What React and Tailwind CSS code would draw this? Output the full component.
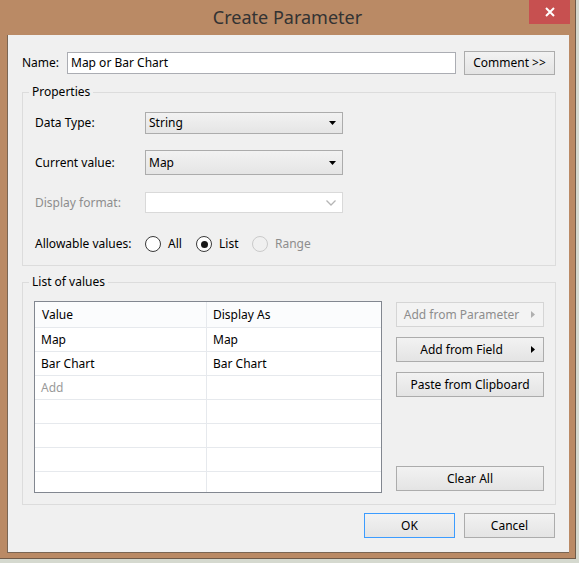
import React from "react";

const ui = "font-['Segoe_UI','Noto_Sans',sans-serif] text-[12px] text-black";
const btn =
  "flex h-[25px] items-center justify-center border border-[#acacac] bg-linear-to-b from-[#f2f2f2] to-[#e4e4e4] text-[12px] text-black";

function DownCaret({ color = "#000" }) {
  return (
    <svg width="7" height="4" viewBox="0 0 7 4" aria-hidden>
      <path d="M0 0h7L3.5 4z" fill={color} />
    </svg>
  );
}

function RightCaret({ color = "#000" }) {
  return (
    <svg width="4" height="7" viewBox="0 0 4 7" aria-hidden>
      <path d="M0 0v7L4 3.5z" fill={color} />
    </svg>
  );
}

function Select({ value, h }) {
  return (
    <div
      className={`flex w-[198px] ${h} items-center justify-between border border-[#acacac] bg-linear-to-b from-[#f2f2f2] to-[#e5e5e5] pl-[3px] pr-[6px]`}
    >
      <span>{value}</span>
      <DownCaret />
    </div>
  );
}

function Radio({ label, checked, disabled, w }) {
  return (
    <div className={`flex items-center ${w}`}>
      <span
        className={`flex h-[16px] w-[16px] items-center justify-center rounded-full border ${
          disabled ? "border-[#cacaca] bg-[#f0f0f0]" : "border-[#3a3a3a] bg-white"
        }`}
      >
        {checked ? <span className="h-[7px] w-[7px] rounded-full bg-[#1a1a1a]" /> : null}
      </span>
      <span className={`ml-[7px] ${disabled ? "text-[#8d8d8d]" : "text-black"}`}>{label}</span>
    </div>
  );
}

const rows = [
  ["Map", "Map"],
  ["Bar Chart", "Bar Chart"],
  ["Add", ""],
  ["", ""],
  ["", ""],
  ["", ""],
];

export default function App() {
  return (
    <div className="h-[563px] w-[579px] overflow-hidden bg-[#d5d9cf]">
      <div className="relative flex h-[559px] w-[576px] flex-col border-r border-b border-[#6f5a48] bg-[#ba8a65]">
        {/* title bar */}
        <div className="flex h-[35px] items-center justify-center font-['Segoe_UI','Noto_Sans',sans-serif] text-[18px] text-[#333]">
          Create Parameter
        </div>
        <button
          type="button"
          aria-label="Close"
          className="absolute top-0 right-[5px] flex h-[24px] w-[41px] items-center justify-center bg-[#c75050]"
        >
          <svg width="10" height="10" viewBox="0 0 10 10" aria-hidden>
            <path d="M1 1l8 8M9 1l-8 8" stroke="#fff" strokeWidth="2" />
          </svg>
        </button>

        {/* dialog body */}
        <div className={`ml-[7px] h-[518px] w-[562px] border-l border-b border-[#7a6654] bg-[#f0f0f0] pl-[14px] ${ui}`}>
          <div className="mt-[16px] flex h-[24px] items-center">
            <span className="w-[45px]">Name:</span>
            <div className="flex h-[22px] w-[389px] items-center border border-[#abadb3] bg-white pl-[3px]">
              Map or Bar Chart
            </div>
            <button type="button" className={`ml-[8px] w-[91px] !h-[24px] ${btn}`}>
              Comment &gt;&gt;
            </button>
          </div>

          <fieldset className="mt-[9px] w-[534px] border border-[#dcdcdc] pt-[12px] pb-[13px] pl-[12px]">
            <legend className="-ml-[6px] px-[3px] leading-[16px]">Properties</legend>
            <div className="flex h-[22px] items-center">
              <span className="w-[110px]">Data Type:</span>
              <Select value="String" h="h-[22px]" />
            </div>
            <div className="mt-[16px] flex h-[25px] items-center">
              <span className="w-[110px]">Current value:</span>
              <Select value="Map" h="h-[25px]" />
            </div>
            <div className="mt-[17px] flex h-[21px] items-center">
              <span className="w-[110px] text-[#8d8d8d]">Display format:</span>
              <div className="flex h-[21px] w-[198px] items-center justify-end border border-[#d9d9d9] bg-white pr-[6px]">
                <svg width="10" height="6" viewBox="0 0 10 6" aria-hidden>
                  <path d="M0.5 0.5L5 5l4.5-4.5" stroke="#b5b5b5" strokeWidth="1.3" fill="none" />
                </svg>
              </div>
            </div>
            <div className="mt-[23px] flex h-[16px] items-center">
              <span className="w-[110px]">Allowable values:</span>
              <Radio label="All" w="w-[51px]" />
              <Radio label="List" checked w="w-[56px]" />
              <Radio label="Range" disabled />
            </div>
          </fieldset>

          <fieldset className="mt-[8px] flex w-[534px] border border-[#dcdcdc] pt-[11px] pr-[11px] pb-[11px] pl-[11px]">
            <legend className="-ml-[5px] px-[3px] leading-[16px]">List of values</legend>
            <div className="flex w-full">
              <div className="w-[348px] border border-[#828790] bg-white">
                <div className="flex h-[26px] border-b border-[#e6e9ed] bg-[#fbfcfd]">
                  <div className="flex w-[172px] items-center border-r border-[#e6e9ed] pl-[7px]">Value</div>
                  <div className="flex flex-1 items-center pl-[6px]">Display As</div>
                </div>
                {rows.map(([a, b], i) => (
                  <div key={i} className="flex h-[24px] border-b border-[#e6e9ed]">
                    <div
                      className={`flex w-[172px] items-center border-r border-[#e6e9ed] pl-[6px] ${
                        a === "Add" ? "text-[#9a9a9a]" : ""
                      }`}
                    >
                      {a}
                    </div>
                    <div className="flex flex-1 items-center pl-[6px]">{b}</div>
                  </div>
                ))}
                <div className="flex h-[20px]">
                  <div className="w-[172px] border-r border-[#e6e9ed]" />
                  <div className="flex-1" />
                </div>
              </div>

              <div className="ml-[14px] flex w-[148px] flex-col justify-between pt-[1px] pb-[2px]">
                <div className="flex flex-col gap-[10px]">
                  <button
                    type="button"
                    className="relative flex h-[25px] items-center justify-center border border-[#d5d5d5] bg-[#f3f3f3] pr-[17px] text-[#8d8d8d]"
                  >
                    Add from Parameter
                    <span className="absolute right-[8px] top-[8px]">
                      <RightCaret color="#b0b0b0" />
                    </span>
                  </button>
                  <button type="button" className={`relative pr-[17px] ${btn}`}>
                    Add from Field
                    <span className="absolute right-[8px] top-[8px]">
                      <RightCaret />
                    </span>
                  </button>
                  <button type="button" className={btn}>
                    Paste from Clipboard
                  </button>
                </div>
                <button type="button" className={btn}>
                  Clear All
                </button>
              </div>
            </div>
          </fieldset>

          <div className="mt-[8px] flex w-[534px] justify-end gap-[9px] pr-[1px]">
            <button
              type="button"
              className="flex h-[25px] w-[91px] items-center justify-center border border-[#3c9cff] bg-linear-to-b from-[#f2f2f2] to-[#e4e4e4]"
            >
              OK
            </button>
            <button type="button" className={`w-[91px] ${btn}`}>
              Cancel
            </button>
          </div>
        </div>
      </div>
    </div>
  );
}
